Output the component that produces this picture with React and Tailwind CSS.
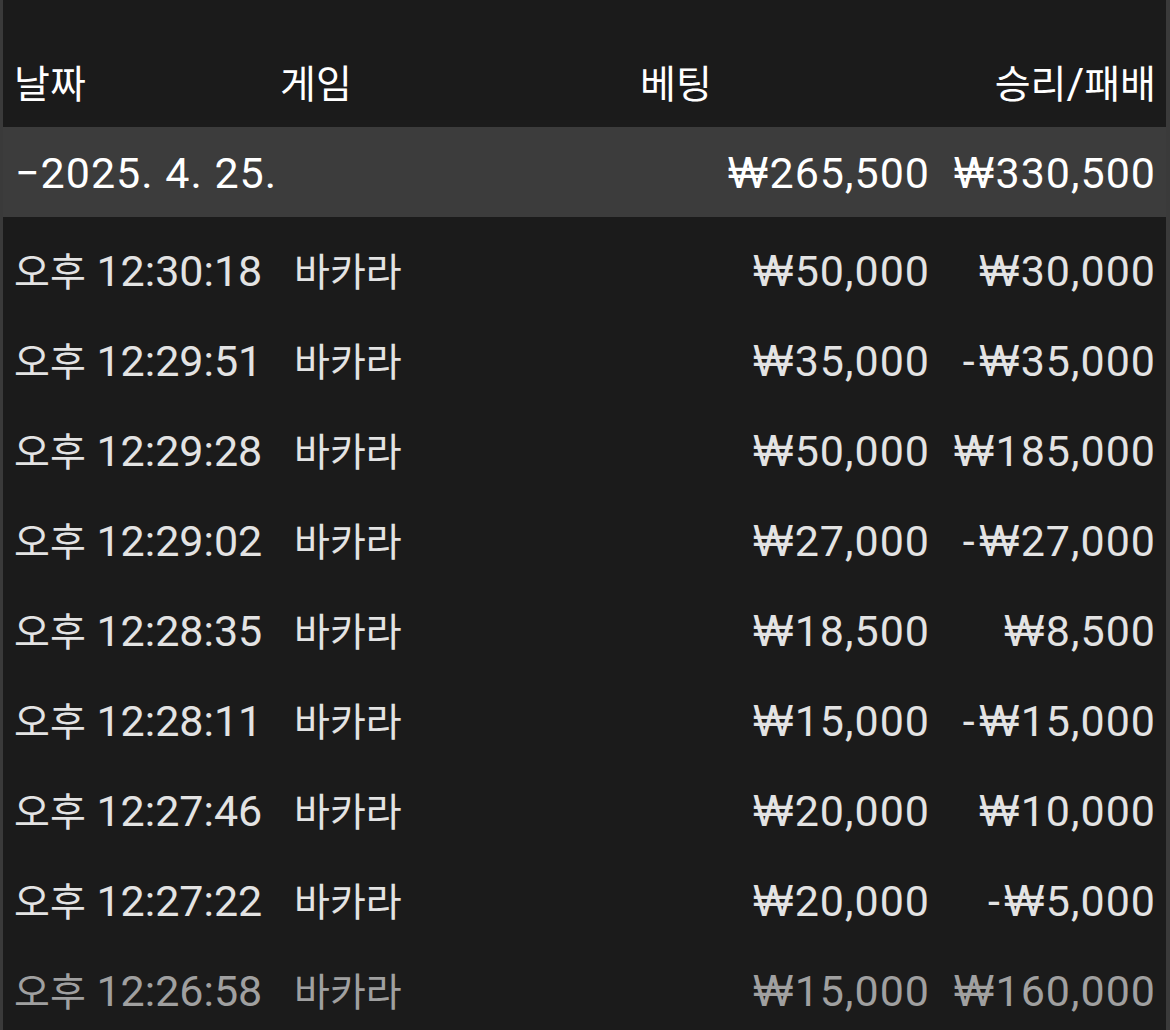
import React from "react";

const rows = [
  ["오후 12:30:18", "바카라", "₩50,000", "₩30,000"],
  ["오후 12:29:51", "바카라", "₩35,000", "-₩35,000"],
  ["오후 12:29:28", "바카라", "₩50,000", "₩185,000"],
  ["오후 12:29:02", "바카라", "₩27,000", "-₩27,000"],
  ["오후 12:28:35", "바카라", "₩18,500", "₩8,500"],
  ["오후 12:28:11", "바카라", "₩15,000", "-₩15,000"],
  ["오후 12:27:46", "바카라", "₩20,000", "₩10,000"],
  ["오후 12:27:22", "바카라", "₩20,000", "-₩5,000"],
  ["오후 12:26:58", "바카라", "₩15,000", "₩160,000"],
];

const font = { fontFamily: 'Roboto, "Noto Sans CJK KR", sans-serif' };
const interFont = { fontFamily: 'Inter, Roboto, sans-serif' };

function T({ s }) {
  const parts = s.match(/[가-힣]+|₩|-|[^가-힣₩-]+/g) || [];
  return (
    <>
      {parts.map((p, i) => {
        if (/[가-힣]/.test(p))
          return (
            <span key={i} className="text-[39px]">
              {p}
            </span>
          );
        if (p === "₩")
          return (
            <span key={i} style={interFont}>
              ₩
            </span>
          );
        if (p === "-")
          return (
            <span key={i} className="pr-[3px]">
              -
            </span>
          );
        return <span key={i}>{p}</span>;
      })}
    </>
  );
}

export default function App() {
  return (
    <div className="w-[1170px] h-[1030px] bg-[#1b1b1b] flex overflow-hidden" style={font}>
      <div className="w-[3px] bg-[#3a3a3a]" />
      <div className="flex-1 flex flex-col text-[43px] leading-none">
        <div className="h-[127px] shrink-0 flex items-end pb-[22px] text-white">
          <div className="w-[277px] pl-[11px]">
            <T s="날짜" />
          </div>
          <div className="w-[360px]">
            <T s="게임" />
          </div>
          <div className="w-[80px]">
            <T s="베팅" />
          </div>
          <div className="flex-1 text-right pr-[10px]">
            <T s="승리/패배" />
          </div>
        </div>
        <div className="h-[90px] shrink-0 bg-[#3c3c3c] flex items-center pt-[2px] text-white">
          <div className="w-[291px] pl-[12px] tracking-[1px]">−2025. 4. 25.</div>
          <div className="flex-1" />
          <div className="w-[300px] text-right tracking-[1px]">
            <T s="₩265,500" />
          </div>
          <div className="w-[236px] text-right pr-[10px] tracking-[1px]">
            <T s="₩330,500" />
          </div>
        </div>
        <div className="pt-[8px] flex flex-col">
          {rows.map((r, i) => (
            <div
              key={i}
              className={
                "h-[90px] shrink-0 flex items-center pt-[2px] " +
                (i === rows.length - 1 ? "text-[#a0a0a0]" : "text-[#e3e3e3]")
              }
            >
              <div className="w-[291px] pl-[11px]">
                <T s={r[0]} />
              </div>
              <div className="flex-1">
                <T s={r[1]} />
              </div>
              <div className="w-[300px] text-right tracking-[1px]">
                <T s={r[2]} />
              </div>
              <div className="w-[236px] text-right pr-[10px] tracking-[1px]">
                <T s={r[3]} />
              </div>
            </div>
          ))}
        </div>
      </div>
      <div className="w-[4px] bg-[#3a3a3a]" />
    </div>
  );
}
